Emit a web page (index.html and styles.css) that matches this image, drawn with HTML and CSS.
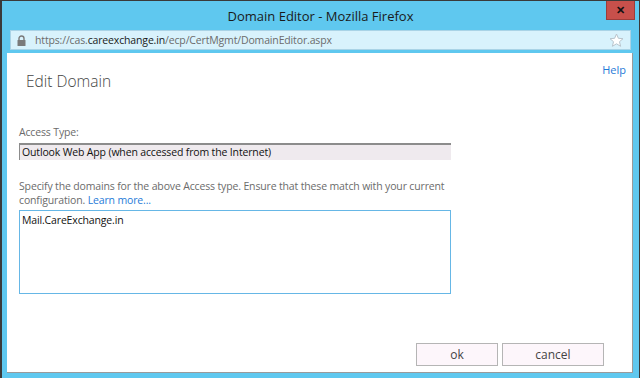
FILE: index.html
```html
<!DOCTYPE html>
<html lang="en">
<head>
    <meta charset="UTF-8">
    <title>Domain Editor - Mozilla Firefox</title>
    <link rel="stylesheet" href="styles.css">
</head>
<body>

    <div class="window">
        <div class="titlebar">
            <span></span>
            <span class="title">Domain Editor - Mozilla Firefox</span>
            <button class="close-button">&#x2715;</button>
        </div>

        <div class="urlbar">
            <svg class="lock" width="9" height="11" viewBox="0 0 9 11">
                <path d="M2 5V3.5a2.5 2.5 0 0 1 5 0V5" fill="none" stroke="#7a7a7a" stroke-width="1.4"/>
                <rect x="0.5" y="5" width="8" height="6" rx="0.5" fill="#7a7a7a"/>
            </svg>
            <span class="url">https://cas.<b>careexchange.in</b>/ecp/CertMgmt/DomainEditor.aspx</span>
            <svg class="star" width="15" height="15" viewBox="0 0 15 15">
                <path d="M7.5 1l1.9 4.3 4.6.4-3.5 3 1.1 4.6-4.1-2.5-4.1 2.5 1.1-4.6-3.5-3 4.6-.4z" fill="#fff" stroke="#b8c4cc" stroke-width="1"/>
            </svg>
        </div>

        <div class="content">
            <div class="header">
                <h1 class="heading">Edit Domain</h1>
                <a class="help" href="#">Help</a>
            </div>

            <div class="field">
                <label class="label">Access Type:</label>
                <div class="readonly-box">Outlook Web App (when accessed from the Internet)</div>
            </div>

            <div class="field">
                <p class="hint">Specify the domains for the above Access type. Ensure that these match with your current configuration. <a href="#">Learn more...</a></p>
                <div class="domains">Mail.CareExchange.in</div>
            </div>

            <div class="footer">
                <button class="dialog-button">ok</button>
                <button class="dialog-button wide">cancel</button>
            </div>
        </div>
    </div>

</body>
</html>
```

FILE: styles.css
```css
body {
    margin: 0;
    font-family: "Open Sans", Arial, sans-serif;
}

.window {
    height: 378px;
    box-sizing: border-box;
    background-color: #5fc8ef;
    border-top: 1px solid #3a3a3a;
    border-left: 2px solid #3a3a3a;
    border-right: 1px solid #3a3a3a;
    display: flex;
    flex-direction: column;
}

.titlebar {
    height: 28px;
    display: grid;
    grid-template-columns: 1fr auto 1fr;
    align-items: start;
}

.title {
    font-size: 13px;
    color: #1a1a1a;
    line-height: 31px;
}

.close-button {
    justify-self: end;
    margin-right: 4px;
    width: 29px;
    height: 19px;
    background-color: #c7504b;
    border: 1px solid #9c3d3a;
    border-top: none;
    color: #111;
    font-size: 11px;
    font-weight: bold;
    padding: 0;
}

.urlbar {
    height: 18px;
    margin: 1px 8px 0 8px;
    background-color: #d8f2fc;
    border: 1px solid #a9d3e6;
    display: flex;
    align-items: center;
    padding: 0 6px;
}

.lock {
    margin-right: 9px;
}

.url {
    flex: 1;
    font-size: 10.5px;
    letter-spacing: -0.15px;
    color: #6b6b6b;
}

.url b {
    font-weight: normal;
    color: #1a1a1a;
}

.content {
    flex: 1;
    margin: 3px 6px 5px 5px;
    background-color: #fff;
    border-right: 1px solid #9a9a9a;
    border-bottom: 1px solid #9a9a9a;
    padding: 0 6px 6px 12px;
    display: flex;
    flex-direction: column;
    font-size: 10.5px;
    letter-spacing: -0.15px;
}

.header {
    display: flex;
    justify-content: space-between;
    align-items: flex-start;
    height: 72px;
    letter-spacing: 0;
}

.heading {
    margin: 17px 0 0 7px;
    font-size: 15.5px;
    font-weight: 300;
    color: #444;
}

.help {
    margin-top: 9px;
    font-size: 11px;
    color: #1f7bd8;
    text-decoration: none;
}

.field {
    width: 432px;
    margin-bottom: 19px;
}

.label {
    display: block;
    color: #6b6b6b;
    line-height: 15px;
    margin-bottom: 3px;
}

.readonly-box {
    height: 15px;
    background-color: #efeaee;
    border-top: 2px solid #8c8c8c;
    border-left: 1px solid #8c8c8c;
    line-height: 15px;
    padding-left: 2px;
    color: #111;
}

.hint {
    margin: 0 0 3px 0;
    line-height: 14px;
    color: #6b6b6b;
}

.hint a {
    color: #1f7bd8;
    text-decoration: none;
}

.domains {
    height: 78px;
    border: 1px solid #66b7e6;
    line-height: 14px;
    padding: 2px 2px;
    color: #111;
}

.footer {
    margin-top: auto;
    display: flex;
    justify-content: flex-end;
    gap: 4px;
    padding-right: 22px;
}

.dialog-button {
    width: 82px;
    height: 23px;
    background-color: #fdf6fb;
    border: 1px solid #b5b5b5;
    font-family: "Open Sans", Arial, sans-serif;
    font-size: 12px;
    color: #444;
    padding: 0;
}

.dialog-button.wide {
    width: 102px;
}
```
